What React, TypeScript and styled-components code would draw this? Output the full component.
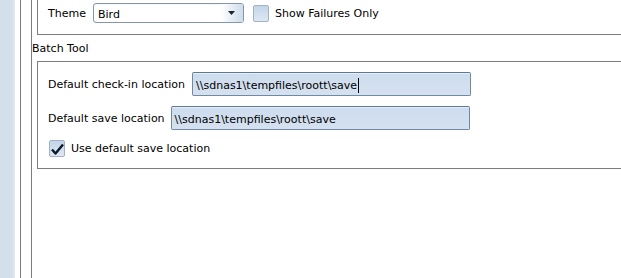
import React from "react";
import styled, { createGlobalStyle } from "styled-components";

const Global = createGlobalStyle`
  html, body { margin: 0; padding: 0; background: #ffffff; }
  body { font-family: "DejaVu Sans", Verdana, sans-serif; font-size: 11px; color: #000; }
  #root { height: 278px; }
`;

const Page = styled.div`
  display: flex;
  height: 278px;
  overflow: hidden;
  background: #ffffff;
`;

const SideStrip = styled.div`
  flex: 0 0 15px;
  background: linear-gradient(to right, #d3dfeb 0%, #d3dfeb 80%, #e3ebf3 100%);
  margin-right: 5px;
`;

const Frame = styled.div<{ $pad: number }>`
  flex: 1;
  display: flex;
  min-width: 0;
  border-left: 1px solid #7c7c7c;
  padding-left: ${(p) => p.$pad}px;
`;

const Content = styled.div`
  flex: 1;
  min-width: 0;
  display: flex;
  flex-direction: column;
`;

const GroupBox = styled.div<{ $top?: boolean }>`
  margin-left: 5px;
  border: 1px solid #7c7c7c;
  border-right: none;
  ${(p) => (p.$top ? "border-top: none; height: 34px;" : "")}
  display: flex;
  flex-direction: column;
`;

const ThemeRow = styled.div`
  display: flex;
  align-items: center;
  height: 20px;
  margin-top: 3px;
  padding-left: 10px;
`;

const Label = styled.span<{ $gap: number }>`
  margin-right: ${(p) => p.$gap}px;
  white-space: nowrap;
  line-height: 13px;
`;

const Combo = styled.div`
  box-sizing: border-box;
  width: 151px;
  height: 20px;
  border: 1px solid #8497ad;
  border-radius: 3px;
  background: #ffffff;
  display: flex;
  align-items: stretch;
  overflow: hidden;
  box-shadow: inset 0 1px 0 #f4f7fa;
`;

const ComboText = styled.span`
  flex: 1;
  padding-left: 4px;
  line-height: 19px;
  padding-top: 1px;
`;

const ComboButton = styled.span`
  width: 22px;
  display: flex;
  align-items: center;
  justify-content: center;
  background: linear-gradient(to right, #ffffff 0%, #e9eff6 45%, #cddbea 100%);
`;

const Check = styled.span`
  box-sizing: border-box;
  width: 16px;
  height: 17px;
  border: 1px solid #9fb2c8;
  border-radius: 2px;
  background: linear-gradient(to bottom, #c4d5e8 0%, #d3e0ee 60%, #dde7f2 100%);
  display: inline-flex;
  align-items: center;
  justify-content: center;
  flex: 0 0 auto;
`;

const CheckText = styled.span`
  margin-left: 6px;
  line-height: 13px;
`;

const ThemeCheck = styled.label`
  display: flex;
  align-items: center;
  margin-left: 9px;
`;

const SectionTitle = styled.div`
  line-height: 13px;
  margin-top: 7px;
  margin-bottom: 6px;
`;

const Fields = styled.div`
  display: flex;
  flex-direction: column;
  gap: 10px;
  padding: 10px 0 11px 10px;
`;

const FieldRow = styled.div`
  display: flex;
  align-items: center;
`;

const TextInput = styled.div<{ $w: number }>`
  box-sizing: border-box;
  width: ${(p) => p.$w}px;
  height: 24px;
  border: 1px solid #6f8aa6;
  border-top-color: #5f7893;
  border-radius: 2px;
  background: linear-gradient(to bottom, #cddcee 0%, #d5e1ef 100%);
  box-shadow: inset 0 1px 0 #e6eef7;
  padding: 2px 0 0 3px;
  display: flex;
  align-items: center;
  white-space: nowrap;
`;

const Caret = styled.span`
  display: inline-block;
  width: 1px;
  height: 15px;
  background: #000;
  margin-left: 1px;
`;

const CheckRow = styled.label`
  display: flex;
  align-items: center;
  margin-left: 1px;
`;

export default function App() {
  return (
    <>
      <Global />
      <Page>
        <SideStrip />
        <Frame $pad={10}>
          <Frame $pad={0}>
            <Content>
              <GroupBox $top>
                <ThemeRow>
                  <Label $gap={7}>Theme</Label>
                  <Combo>
                    <ComboText>Bird</ComboText>
                    <ComboButton>
                      <svg width="7" height="4" viewBox="0 0 7 4">
                        <path d="M0 0 H7 L3.5 4 Z" fill="#1c2530" />
                      </svg>
                    </ComboButton>
                  </Combo>
                  <ThemeCheck>
                    <Check />
                    <CheckText>Show Failures Only</CheckText>
                  </ThemeCheck>
                </ThemeRow>
              </GroupBox>
              <SectionTitle>Batch Tool</SectionTitle>
              <GroupBox>
                <Fields>
                  <FieldRow>
                    <Label $gap={7}>Default check-in location</Label>
                    <TextInput $w={279}>
                      {"\\\\sdnas1\\tempfiles\\roott\\save"}
                      <Caret />
                    </TextInput>
                  </FieldRow>
                  <FieldRow>
                    <Label $gap={6}>Default save location</Label>
                    <TextInput $w={299}>{"\\\\sdnas1\\tempfiles\\roott\\save"}</TextInput>
                  </FieldRow>
                  <CheckRow>
                    <Check>
                      <svg width="13" height="12" viewBox="0 0 13 12">
                        <path
                          d="M1 6.5 L4.5 10.5 L12 1.5"
                          fill="none"
                          stroke="#0d1a2a"
                          strokeWidth="2.4"
                          strokeLinejoin="round"
                        />
                      </svg>
                    </Check>
                    <CheckText>Use default save location</CheckText>
                  </CheckRow>
                </Fields>
              </GroupBox>
            </Content>
          </Frame>
        </Frame>
      </Page>
    </>
  );
}
